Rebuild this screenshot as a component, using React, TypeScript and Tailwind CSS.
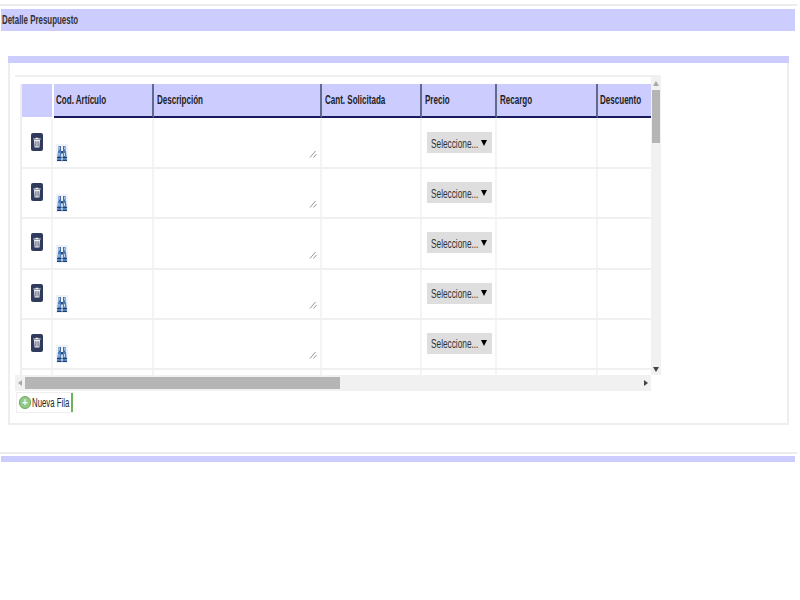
import React from 'react';

const columns = [
  { label: 'Cod. Artículo', className: 'w-[100px] pl-[2px]' },
  { label: 'Descripción', className: 'w-[168px] pl-[3px]' },
  { label: 'Cant. Solicitada', className: 'w-[100px] pl-[3px]' },
  { label: 'Precio', className: 'w-[75px] pl-[3px]' },
  { label: 'Recargo', className: 'w-[101px] pl-[3px]' },
  { label: 'Descuento', className: 'w-[54px] pl-[2px]' },
];

function TrashIcon() {
  return (
    <div className="flex h-[18px] w-[12px] items-center justify-center rounded-[2px] bg-[#2f3a5c]">
      <svg width="8" height="11" viewBox="0 0 9 12">
        <path d="M3 1.500V.6h3v.9h2.600v1.200H.4V1.500z" fill="#f2f2f2" />
        <path d="M1.200 3.300h6.600L7.200 11.600H1.800z" fill="#f2f2f2" />
        <path d="M3 4.500v6M4.500 4.500v6M6 4.500v6" stroke="#2f3a5c" strokeWidth="0.7" />
      </svg>
    </div>
  );
}

function BinocularsIcon() {
  return (
    <svg width="12" height="18" viewBox="0 0 12 18" className="bg-[#eef1f7]">
      <path d="M2.500 2h2.500v5H2.500zM7 2h2.500v5H7z" fill="#3f6fab" />
      <path d="M3 2.500h1v3H3zM8 2.500h1v3H8z" fill="#a9c4e4" />
      <path d="M3.500 7h5v2.500h-5z" fill="#24497f" />
      <path d="M2 7h3l.5 10H1z" fill="#4f7fba" />
      <path d="M7 7h3l1 10H6.500z" fill="#4f7fba" />
      <path d="M2.500 9h1v3h-1zM8 9h1v3H8z" fill="#c3d7ee" />
      <path d="M1 13.500h4.500M6.500 13.500H11M1 16.500h4.500M6.500 16.500H11" stroke="#1f3f70" strokeWidth="1" />
    </svg>
  );
}

function ResizeGrip() {
  return (
    <svg width="8" height="8" viewBox="0 0 8 8" className="absolute bottom-[9px] right-[3px]">
      <path d="M1 7.500 6.500 1M4.500 7.500 7.500 4" stroke="#8a8a8a" strokeWidth="0.9" fill="none" />
    </svg>
  );
}

function PriceSelect() {
  return (
    <div className="ml-[5px] mt-[13px] flex h-[21px] w-[65px] items-center justify-between bg-[#dedede] pl-[4px] pr-[5px] text-[#333]">
      <span className="w-[46px] shrink-0">
        <span className="inline-block origin-left scale-x-[0.69] text-[12px] whitespace-nowrap">Seleccione...</span>
      </span>
      <span className="h-0 w-0 border-x-[3px] border-t-[6px] border-x-transparent border-t-black" />
    </div>
  );
}

function Row({ clipped = false }: { clipped?: boolean }) {
  return (
    <div className="flex h-[50.200px] border-b-2 border-[#f0f0f0]">
      <div className="flex w-[31px] shrink-0 justify-center border-r-2 border-[#f4f4f4] pt-[14px]">
        {!clipped && <TrashIcon />}
      </div>
      <div className="flex w-[101px] shrink-0 items-end border-r-2 border-[#f4f4f4] pb-[5px] pl-[3px]">
        {!clipped && <BinocularsIcon />}
      </div>
      <div className="relative w-[168px] shrink-0 border-r-2 border-[#f4f4f4]">
        {!clipped && <ResizeGrip />}
      </div>
      <div className="w-[100px] shrink-0 border-r-2 border-[#f4f4f4]" />
      <div className="w-[75px] shrink-0 border-r-2 border-[#f4f4f4]">
        {!clipped && <PriceSelect />}
      </div>
      <div className="w-[101px] shrink-0 border-r-2 border-[#f4f4f4]" />
      <div className="w-[54px] shrink-0" />
    </div>
  );
}

export default function App() {
  return (
    <div className="h-[600px] w-[800px] overflow-hidden bg-white font-['Liberation_Sans',Arial,sans-serif]">
      <div className="mr-[3px] mt-[4px] h-[2px] bg-[#ececec]" />
      <div className="ml-[1px] mr-[5px] mt-[3px] flex h-[22px] items-center bg-[#ccccff] pl-[1px]">
        <span className="inline-block origin-left scale-x-[0.66] whitespace-nowrap text-[12px] font-bold text-[#333]">Detalle Presupuesto</span>
      </div>

      <div className="ml-[8px] mt-[25px] w-[781px]">
        <div className="h-[7px] bg-[#ccccff]" />
        <div className="h-[362px] border-x-2 border-b-2 border-[#eeeeee] pl-[5px] pt-[12px]">
          <div className="w-[646px] border-t-2 border-[#f0f0f0]">
            <div className="flex h-[298px]">
              <div className="h-full w-[636px] overflow-hidden pl-[5px] pt-[7px]">
                <div className="border-l-2 border-[#eeeeee]">
                  <div className="flex h-[35px]">
                    <div className="mr-[2px] h-[33px] w-[30px] shrink-0 bg-[#ccccff]" />
                    {columns.map((col, i) => (
                      <div
                        key={col.label}
                        className={`${col.className} flex h-[34px] shrink-0 items-center border-b-2 border-b-[#1a1a5e] bg-[#ccccff] ${i < columns.length - 1 ? 'border-r-2 border-r-[#5f6b8a]' : ''}`}
                      >
                        <span className="inline-block origin-left scale-x-[0.67] whitespace-nowrap text-[12px] font-bold text-[#222]">{col.label}</span>
                      </div>
                    ))}
                  </div>
                  <Row />
                  <Row />
                  <Row />
                  <Row />
                  <Row />
                  <Row clipped />
                </div>
              </div>
              {/* barra vertical */}
              <div className="relative h-full w-[10px] shrink-0 bg-[#f1f1f1]">
                <div className="flex h-[13px] items-center justify-center">
                  <span className="h-0 w-0 border-x-[3px] border-b-[5px] border-x-transparent border-b-[#a8a8a8]" />
                </div>
                <div className="mx-auto h-[53px] w-[8px] bg-[#b5b5b5]" />
                <span className="absolute bottom-[3px] left-[2px] h-0 w-0 border-x-[3px] border-t-[5px] border-x-transparent border-t-[#444]" />
              </div>
            </div>
            {/* barra horizontal */}
            <div className="flex h-[16px] w-[636px] items-center bg-[#f1f1f1]">
              <div className="flex w-[10px] justify-center">
                <span className="h-0 w-0 border-y-[3px] border-r-[4px] border-y-transparent border-r-[#a8a8a8]" />
              </div>
              <div className="h-[12px] w-[315px] bg-[#b5b5b5]" />
              <div className="flex-1" />
              <span className="mr-[3px] h-0 w-0 border-y-[3px] border-l-[4px] border-y-transparent border-l-[#444]" />
            </div>
            <div className="ml-[1px] mt-[1px] flex h-[21px] w-[57px] items-center border border-r-0 border-[#eeeeee]">
              <span className="ml-[2px] flex h-[13px] w-[12px] shrink-0 items-center justify-center rounded-full border border-[#6fa85c] bg-[#93c983] text-[10px] font-bold leading-none text-white">+</span>
              <span className="w-[40px] shrink-0 pb-[2px] pl-[1px]">
                <span className="inline-block origin-left scale-x-[0.65] whitespace-nowrap text-[12px] text-[#222]">Nueva Fila</span>
              </span>
              <div className="h-full w-[2px] shrink-0 bg-[#6cb35a]" />
            </div>
          </div>
        </div>
      </div>

      <div className="mr-[3px] mt-[27px] h-[2px] bg-[#ececec]" />
      <div className="ml-[1px] mr-[5px] mt-[2px] h-[6px] bg-[#ccccff]" />
    </div>
  );
}
